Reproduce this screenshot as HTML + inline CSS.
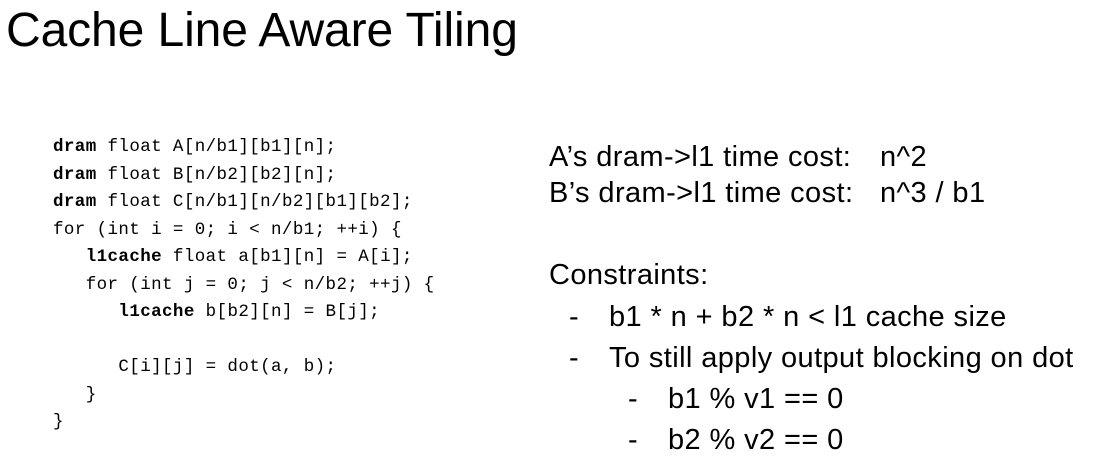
<!DOCTYPE html>
<html><head><meta charset="utf-8"><style>
html,body{margin:0;padding:0;background:#fff;}
body{width:1108px;height:476px;position:relative;overflow:hidden;color:#000;}
.t{position:absolute;left:6px;top:7px;font:48px/1 "Liberation Sans",sans-serif;white-space:nowrap;letter-spacing:-0.1px;}
pre{position:absolute;left:53px;top:134px;margin:0;font:17.5px/27.5px "Liberation Mono",monospace;letter-spacing:0.4px;color:#000;}
pre b{font-weight:bold;}
.r{position:absolute;font:29px/1 "Liberation Sans",sans-serif;white-space:nowrap;letter-spacing:0.4px;}
</style></head><body>
<div class="t">Cache Line Aware Tiling</div>
<pre><b>dram</b> float A[n/b1][b1][n];
<b>dram</b> float B[n/b2][b2][n];
<b>dram</b> float C[n/b1][n/b2][b1][b2];
for (int i = 0; i &lt; n/b1; ++i) {
   <b>l1cache</b> float a[b1][n] = A[i];
   for (int j = 0; j &lt; n/b2; ++j) {
      <b>l1cache</b> b[b2][n] = B[j];

      C[i][j] = dot(a, b);
   }
}</pre>
<div class="r" style="left:549px;top:143px">A’s dram-&gt;l1 time cost:</div>
<div class="r" style="left:880px;top:143px">n^2</div>
<div class="r" style="left:549px;top:179px">B’s dram-&gt;l1 time cost:</div>
<div class="r" style="left:880px;top:179px">n^3 / b1</div>
<div class="r" style="left:549px;top:261px">Constraints:</div>
<div class="r" style="left:569px;top:303px">-</div>
<div class="r" style="left:609px;top:303px">b1 * n + b2 * n &lt; l1 cache size</div>
<div class="r" style="left:569px;top:344px">-</div>
<div class="r" style="left:609px;top:344px">To still apply output blocking on dot</div>
<div class="r" style="left:628px;top:385px">-</div>
<div class="r" style="left:668px;top:385px">b1 % v1 == 0</div>
<div class="r" style="left:628px;top:426px">-</div>
<div class="r" style="left:668px;top:426px">b2 % v2 == 0</div>
</body></html>
